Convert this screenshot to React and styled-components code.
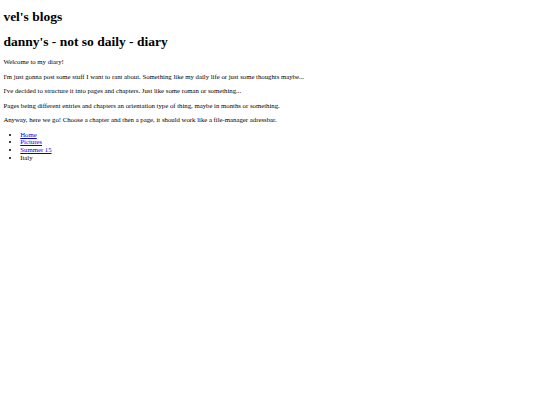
import React from 'react'
import styled, { createGlobalStyle } from 'styled-components'

const GlobalStyle = createGlobalStyle`
  body {
    margin: 0;
    background: #fff;
    color: #000;
    font-family: "Liberation Serif", "Times New Roman", serif;
  }
`

// the shot is a 1280px wide page shrunk to 540px;
// margin (not padding) so the first heading's margin collapses like the default body does
const Page = styled.div`
  zoom: 0.421875;
  margin: 8px;
  font-size: 16px;
  line-height: 1.15;
`

const Title = styled.h1`
  font-size: 2em;
  font-weight: bold;
  margin: 0.67em 0;
`

const Text = styled.p`
  margin: 1em 0;
`

const Crumbs = styled.ul`
  margin: 1em 0;
  padding-left: 40px;
  list-style: disc;
`

const Crumb = styled.li``

const CrumbLink = styled.a`
  color: #0000ee;
  text-decoration: underline;
`

const crumbs = [
  { label: 'Home', href: '#home' },
  { label: 'Pictures', href: '#pictures' },
  { label: 'Summer 15', href: '#summer-15' },
  { label: 'Italy' },
]

const App = () => {
  return (
    <Page>
      <GlobalStyle />
      <Title>vel's blogs</Title>
      <Title>danny's - not so daily - diary</Title>
      <Text>Welcome to my diary!</Text>
      <Text>
        I'm just gonna post some stuff I want to rant about. Something like my
        daily life or just some thoughts maybe...
      </Text>
      <Text>
        I've decided to structure it into pages and chapters. Just like some
        roman or something...
      </Text>
      <Text>
        Pages being different entries and chapters an orientation type of
        thing, maybe in months or something.
      </Text>
      <Text>
        Anyway, here we go! Choose a chapter and then a page, it should work
        like a file-manager adressbar.
      </Text>
      <Crumbs>
        {crumbs.map((item) => (
          <Crumb key={item.label}>
            {item.href ? (
              <CrumbLink href={item.href}>{item.label}</CrumbLink>
            ) : (
              item.label
            )}
          </Crumb>
        ))}
      </Crumbs>
    </Page>
  )
}

export default App
